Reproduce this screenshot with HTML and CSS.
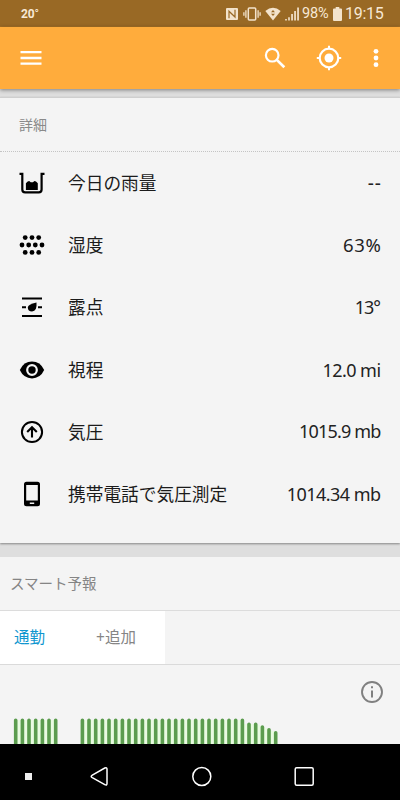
FILE: index.html
```html
<!DOCTYPE html>
<html lang="ja">
<head>
<meta charset="utf-8">
<title>詳細</title>
<link rel="stylesheet" href="styles.css">
</head>
<body>
<div class="screen">
  <div class="status">
    <span class="temp">20<span class="deg">°</span></span>
    <div class="status-right">
      <svg class="s-nfc" width="14" height="14" viewBox="0 0 14 14"><rect x="1" y="1" width="12" height="12" rx="1" fill="#f3e3cc"/><path d="M4 11.300V4.200L10 10V2.700" fill="none" stroke="#996925" stroke-width="1.200"/></svg>
      <svg class="s-vib" width="18" height="14" viewBox="0 0 18 14"><rect x="5.300" y="1" width="7.400" height="12" rx="1" fill="none" stroke="#f3e3cc" stroke-width="1.500"/><path d="M2.900 3.300v7.400M15.100 3.300v7.400M.9 5.300v3.400M17.100 5.300v3.400" stroke="#f3e3cc" stroke-width="1.300"/></svg>
      <svg class="s-wifi" width="16" height="14" viewBox="0 0 16 14"><path d="M.3 4Q8-2.400 15.700 4L8 13.600z" fill="#f3e3cc"/><path d="M6 5.200l2-2.200 2 2.200zM6 6.800l2 2.200 2-2.200z" fill="#996925"/></svg>
      <svg class="s-sig" width="14" height="14" viewBox="0 0 14 14"><path d="M.2 12h1.600v1.500H.2zM3.200 10.300h1.600v3.200H3.200zM6.200 7h1.700v6.500H6.200zM9.200 4h1.700v9.500H9.200zM12.200.6h1.700v12.900h-1.700z" fill="#f3e3cc"/></svg>
      <span class="pct">98%</span>
      <svg class="s-bat" width="9" height="14" viewBox="0 0 9 14"><path d="M2.700 0h3.600v1.500h1.700q1 0 1 1V13q0 1-1 1H1q-1 0-1-1V2.500q0-1 1-1h1.700z" fill="#f3e3cc"/></svg>
      <span class="clock">19:15</span>
    </div>
  </div>
  <header class="appbar">
    <svg width="22" height="16" viewBox="0 0 22 16"><path d="M.5 2.200h21M.5 8h21M.5 13.700h21" stroke="#fff" stroke-width="2.300"/></svg>
    <div class="actions">
      <svg width="22" height="22" viewBox="0 0 22 22"><circle cx="8.200" cy="8.200" r="6.300" fill="none" stroke="#fff" stroke-width="2.200"/><path d="M12.600 12.600l7.700 7.600" stroke="#fff" stroke-width="2.700"/></svg>
      <svg class="locate" width="26" height="26" viewBox="0 0 26 26"><circle cx="13" cy="13" r="9.300" fill="none" stroke="#fff" stroke-width="2.200"/><circle cx="13" cy="13" r="4.500" fill="#fff"/><path d="M13 .8V4M13 22v3.200M.8 13H4M22 13h3.200" stroke="#fff" stroke-width="2"/></svg>
      <svg class="more" width="6" height="20" viewBox="0 0 6 20"><g fill="#fff"><circle cx="3" cy="3.300" r="2.400"/><circle cx="3" cy="10" r="2.400"/><circle cx="3" cy="16.700" r="2.400"/></g></svg>
    </div>
  </header>
  <section class="card">
    <h2 class="card-title">詳細</h2>
    <ul class="rows">
      <li class="row"><svg class="icon" viewBox="0 0 26 26"><path d="M.5 3.900h2.800V19.500q0 2.800 2.800 2.800h13.700q2.800 0 2.800-2.800V3.900h2.900" fill="none" stroke="#000" stroke-width="2.200"/><path d="M6.900 20V13.300l1.800-1.700 1.500-.5 1.500 1.200h2.200l1.600-1.200 1.500.5 1.800 1.700V20z"/></svg><span class="label">今日の雨量</span><span class="value dashes">--</span></li>
      <li class="row"><svg class="icon" viewBox="0 0 26 26"><circle cx="6.200" cy="5.600" r="2.400"/><circle cx="13" cy="5.600" r="2.400"/><circle cx="19.700" cy="5.600" r="2.400"/><circle cx="3" cy="13" r="2.400"/><circle cx="9.700" cy="13" r="2.400"/><circle cx="16.300" cy="13" r="2.400"/><circle cx="23" cy="13" r="2.400"/><circle cx="6.200" cy="20.400" r="2.400"/><circle cx="13" cy="20.400" r="2.400"/><circle cx="19.700" cy="20.400" r="2.400"/></svg><span class="label">湿度</span><span class="value wide">63%</span></li>
      <li class="row"><svg class="icon" viewBox="0 0 26 26"><path d="M3 4.500h20M3 22h20M3 13.300h4M19 13.300h4" stroke="#000" stroke-width="2.100"/><path d="M17.500 8.600q.8 8.900-4.500 8.900-4.100 0-4.200-3.700 0-3.400 8.700-5.200z"/></svg><span class="label">露点</span><span class="value tight">13°</span></li>
      <li class="row"><svg class="icon" viewBox="0 0 26 26"><path d="M.8 13Q4.800 4.600 13 4.600T25.200 13Q21.200 21.400 13 21.400T.8 13z"/><circle cx="13" cy="13" r="4.800" stroke="#f4f4f4" stroke-width="2.200"/></svg><span class="label">視程</span><span class="value mid">12.0 mi</span></li>
      <li class="row"><svg class="icon" viewBox="0 0 26 26"><circle cx="13" cy="13" r="10.100" fill="none" stroke="#000" stroke-width="2"/><path d="M13 18.500V8.500M8.200 13L13 8.300l4.800 4.700" fill="none" stroke="#000" stroke-width="2.100"/></svg><span class="label">気圧</span><span class="value narrow">1015.9 mb</span></li>
      <li class="row"><svg class="icon" viewBox="0 0 26 26"><path fill-rule="evenodd" d="M7.500.8h11q2.500 0 2.500 2.500v19.400q0 2.500-2.500 2.500h-11Q5 25.200 5 22.700V3.300Q5 .8 7.500.8zM7.200 4v15.500h11.600V4zM10.800 21.400v1.500h4.400v-1.500z"/></svg><span class="label">携帯電話で気圧測定</span><span class="value mid">1014.34 mb</span></li>
    </ul>
  </section>
  <section class="smart">
    <h2 class="smart-title">スマート予報</h2>
    <div class="tabs"><div class="tab-group"><span class="tab active">通勤</span><span class="tab">+追加</span></div></div>
    <div class="forecast">
      <svg class="info" width="24" height="24" viewBox="0 0 24 24"><circle cx="12" cy="12" r="10" fill="none" stroke="#808080" stroke-width="1.900"/><path d="M12 10.500v7M12 6.300v2" stroke="#808080" stroke-width="2"/></svg>
      <svg class="chart" width="400" height="26" viewBox="0 0 400 26">
        <path d="M14 2h43v24H14zM81 2h163v4h13l20 9v11H81z" fill="#e9fbe1"/>
        <path class="bars" d="M15.700 2.300V30M22.400 2.300V30M29 2.300V30M35.700 2.300V30M42.400 2.300V30M49 2.300V30M55.700 2.300V30M82.400 2.300V30M89 2.300V30M95.700 2.300V30M102.400 2.300V30M109 2.300V30M115.700 2.300V30M122.400 2.300V30M129 2.300V30M135.700 2.300V30M142.400 2.300V30M149 2.300V30M155.700 2.300V30M162.400 2.300V30M169 2.300V30M175.700 2.300V30M182.400 2.300V30M189 2.300V30M195.700 2.300V30M202.400 2.300V30M209 2.300V30M215.700 2.300V30M222.400 2.300V30M229 2.300V30M235.700 2.300V30M242.400 2.300V30M249 6.300V30M255.700 6.300V30M262.400 9V30M269 11.800V30M275.700 14.800V30"/>
      </svg>
    </div>
  </section>
  <nav class="nav">
    <svg width="400" height="56" viewBox="0 0 400 56" fill="none" stroke="#fff" stroke-width="1.500"><path d="M25 29h7v7h-7z" fill="#eee" stroke="none"/><path d="M92.300 31.100L104.800 24q2.200-1 2.200 1.200V39.500q0 2.400-2.200 1.200L92.300 33.700q-2.200-1.300 0-2.600z"/><circle cx="201.800" cy="32.500" r="9"/><rect x="295.200" y="23.700" width="18" height="17.600" rx="1.500"/></svg>
  </nav>
</div>
</body>
</html>
```
FILE: styles.css
```css
* { box-sizing: border-box; }
body { margin: 0; background: #dedede; font-family: "Noto Sans", "Noto Sans CJK JP", sans-serif; }
h2, ul { margin: 0; padding: 0; font-weight: 400; list-style: none; }
svg { display: block; flex: none; }
.screen { width: 400px; height: 800px; overflow: hidden; display: flex; flex-direction: column; background: #dedede; }

.status { height: 27px; flex: none; background: #996925; border-bottom: 1px solid #a77126; color: #f7e8d5; display: flex; justify-content: space-between; align-items: center; padding: 1px 16px 0 21px; font-family: Roboto, sans-serif; }
.temp { font-size: 12px; font-weight: 700; letter-spacing: -.1px; }
.deg { font-weight: 400; font-size: 12px; }
.status-right { display: flex; align-items: center; }
.s-vib { margin-left: 4px; }
.s-wifi { margin-left: 4px; }
.s-sig { margin-left: 4px; }
.pct { font-size: 14.500px; width: 27px; margin-left: 3px; white-space: nowrap; letter-spacing: -.2px; }
.s-bat { margin-left: 4px; }
.clock { font-size: 16px; width: 38px; margin-left: 3px; margin-right: 1px; white-space: nowrap; letter-spacing: -.3px; }

.appbar { height: 62px; flex: none; background: #ffac3c; box-shadow: 0 1px 4px rgba(0,0,0,.45); display: flex; justify-content: space-between; align-items: center; padding: 0 21px 0 20px; z-index: 1; }
.actions { display: flex; align-items: center; }
.locate { margin-left: 30px; }
.more { margin-left: 31px; }

.card { margin-top: 8px; height: 446px; flex: none; background: #f4f4f4; border-top: 1px solid #cfcfcf; box-shadow: 0 1px 2px rgba(0,0,0,.4); }
.card-title { height: 54px; border-bottom: 1px dotted #c4c4c4; padding-left: 19px; font-size: 14px; line-height: 53px; color: #8a8a8a; }
.row { height: 62.2px; display: flex; align-items: center; padding: 0 19px; }
.icon { width: 26px; height: 26px; }
.label { margin-left: 23px; padding-bottom: 2px; font-family: "Noto Sans CJK JP", sans-serif; font-size: 17.7px; line-height: 26px; color: #1b1b1b; flex: 1; }
.value { font-size: 18px; line-height: 24px; color: #222; white-space: nowrap; }
.dashes { letter-spacing: 1px; margin-right: -1px; font-size: 19px; }
.wide { font-size: 18.500px; letter-spacing: .7px; margin-right: -.7px; }
.tight { letter-spacing: -1px; padding-right: 1px; }
.mid { letter-spacing: -.55px; padding-right: .5px; }
.narrow { letter-spacing: -.8px; padding: 0 .4px 2px 0; }

.smart { margin-top: 14px; height: 187px; flex: none; background: #f4f4f4; }
.smart-title { height: 54px; border-bottom: 1px solid #dcdcdc; padding-left: 10px; font-family: "Noto Sans CJK JP", sans-serif; font-size: 14.500px; line-height: 51px; color: #858585; }
.tabs { height: 54px; border-bottom: 1px solid #dadada; }
.tab-group { width: 165px; height: 53px; background: #fff; display: flex; align-items: center; padding: 0 0 1px 14px; gap: 51px; }
.tab { font-size: 15.500px; line-height: 22px; color: #858585; }
.active { color: #0e96cf; }
.forecast { height: 79px; display: flex; flex-direction: column; justify-content: space-between; }
.info { align-self: flex-end; margin: 15px 16px 0 0; }
.bars { fill: none; stroke: #5b9c4e; stroke-width: 3.600; stroke-linecap: round; }

.nav { flex: 1; background: #000; }
```
